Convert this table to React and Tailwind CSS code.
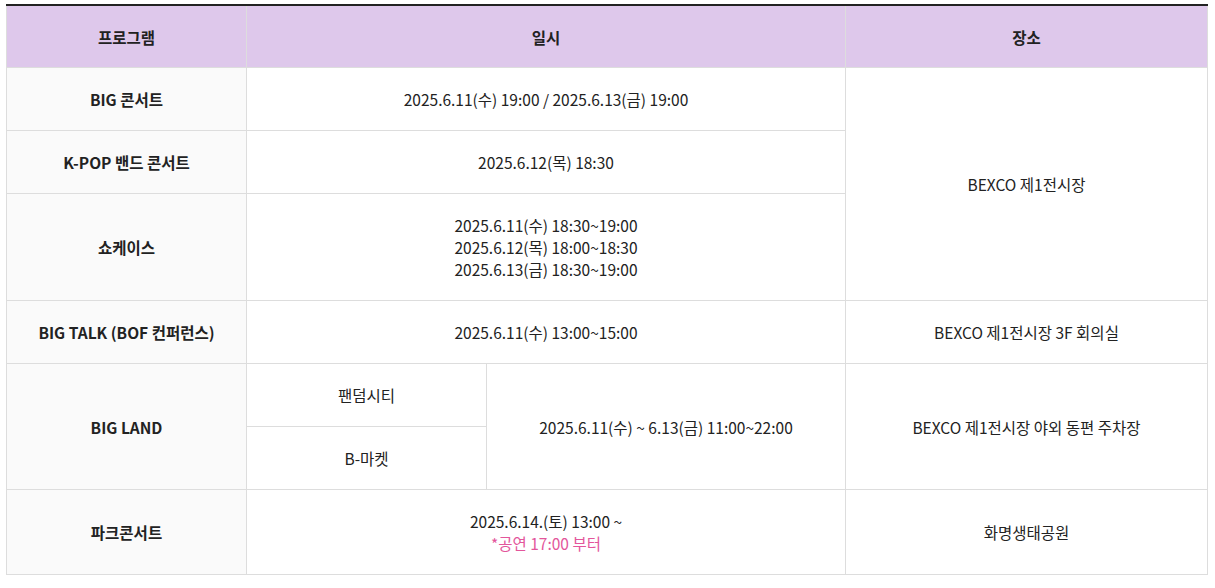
import React from "react";

const td = "border border-[#dddddd] py-5 px-2 text-center align-middle";
const th = "border border-[#dddddd] pt-5 pb-[19px] px-2 text-center align-middle font-bold";

export default function App() {
  return (
    <div
      className="bg-white pt-[4px] pl-[6px] text-[15.5px] leading-[22px] text-[#222222]"
      style={{ fontFamily: '"Noto Sans CJK KR", "Noto Sans", sans-serif' }}
    >
      <table className="w-[1201px] table-fixed border-collapse border-t-2 border-t-[#222222]">
        <colgroup>
          <col className="w-[240px]" />
          <col className="w-[240px]" />
          <col className="w-[359px]" />
          <col className="w-[362px]" />
        </colgroup>
        <thead>
          <tr className="bg-[#dec8eb]">
            <th className={`${th} border-t-0`}>프로그램</th>
            <th className={`${th} border-t-0`} colSpan={2}>일시</th>
            <th className={`${th} border-t-0`}>장소</th>
          </tr>
        </thead>
        <tbody>
          <tr>
            <td className={`${td} bg-[#fafafa] font-bold`}>BIG 콘서트</td>
            <td className={td} colSpan={2}>2025.6.11(수) 19:00 / 2025.6.13(금) 19:00</td>
            <td className={td} rowSpan={3}>BEXCO 제1전시장</td>
          </tr>
          <tr>
            <td className={`${td} bg-[#fafafa] font-bold`}>K-POP 밴드 콘서트</td>
            <td className={td} colSpan={2}>2025.6.12(목) 18:30</td>
          </tr>
          <tr>
            <td className={`${td} bg-[#fafafa] font-bold`}>쇼케이스</td>
            <td className={td} colSpan={2}>
              2025.6.11(수) 18:30~19:00
              <br />
              2025.6.12(목) 18:00~18:30
              <br />
              2025.6.13(금) 18:30~19:00
            </td>
          </tr>
          <tr>
            <td className={`${td} bg-[#fafafa] font-bold`}>BIG TALK (BOF 컨퍼런스)</td>
            <td className={td} colSpan={2}>2025.6.11(수) 13:00~15:00</td>
            <td className={td}>BEXCO 제1전시장 3F 회의실</td>
          </tr>
          <tr>
            <td className={`${td} bg-[#fafafa] font-bold`} rowSpan={2}>BIG LAND</td>
            <td className={td}>팬덤시티</td>
            <td className={td} rowSpan={2}>2025.6.11(수) ~ 6.13(금) 11:00~22:00</td>
            <td className={td} rowSpan={2}>BEXCO 제1전시장 야외 동편 주차장</td>
          </tr>
          <tr>
            <td className={td}>B-마켓</td>
          </tr>
          <tr>
            <td className={`${td} bg-[#fafafa] font-bold`}>파크콘서트</td>
            <td className={td} colSpan={2}>
              2025.6.14.(토) 13:00 ~
              <br />
              <span className="text-[#e3569b]">*공연 17:00 부터</span>
            </td>
            <td className={td}>화명생태공원</td>
          </tr>
        </tbody>
      </table>
    </div>
  );
}
